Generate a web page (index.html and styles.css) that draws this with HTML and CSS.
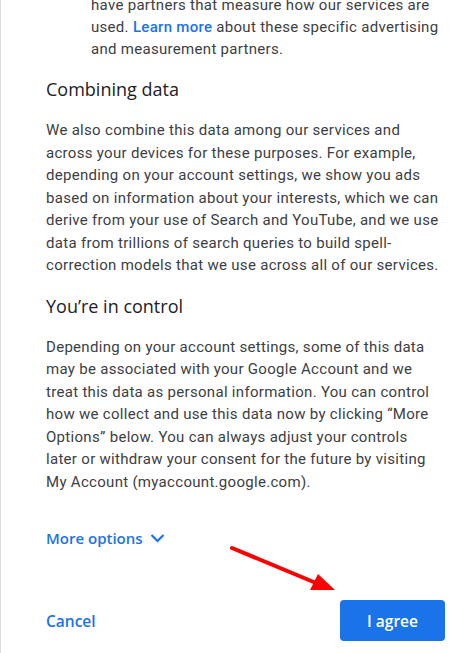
FILE: index.html
```html
<!DOCTYPE html>
<html lang="en">
<head>
<meta charset="utf-8">
<title>Consent</title>
<link rel="stylesheet" href="styles.css">
</head>
<body>
<div class="dialog">
  <div class="content">
    <p class="sub">have partners that measure how our services are used. <a class="link" href="#">Learn more</a> about these specific advertising and measurement partners.</p>

    <h2 class="heading">Combining data</h2>
    <p class="para">We also combine this data among our services and across your devices for these purposes. For example, depending on your account settings, we show you ads based on information about your interests, which we can derive from your use of Search and YouTube, and we use data from trillions of search queries to build spell-correction models that we use across all of our services.</p>

    <h2 class="heading">You’re in control</h2>
    <p class="para">Depending on your account settings, some of this data may be associated with your Google Account and we treat this data as personal information. You can control how we collect and use this data now by clicking “More Options” below. You can always adjust your controls later or withdraw your consent for the future by visiting My Account (myaccount.google.com).</p>

    <button class="more" type="button">More options
      <svg class="chev" width="15" height="10" viewBox="0 0 15 10"><path d="M1.5 2l6 6 6-6" fill="none" stroke="#1a73e8" stroke-width="2.2"/></svg>
    </button>
  </div>

  <div class="footer">
    <button class="cancel" type="button">Cancel</button>
    <button class="agree" type="button">I agree</button>
    <svg class="arrow" width="120" height="60" viewBox="0 0 120 60">
      <line x1="4" y1="6" x2="88" y2="41" stroke="#ff0000" stroke-width="4" stroke-linecap="round"/>
      <polygon points="107,48 82,48 90,32" fill="#ff0000"/>
    </svg>
  </div>
</div>
</body>
</html>
```

FILE: styles.css
```css
html, body {
  margin: 0;
  padding: 0;
  background: #ffffff;
}

.dialog {
  position: relative;
  width: 466px;
  height: 653px;
  border-left: 1px solid #dadce0;
  overflow: hidden;
  font-family: Roboto, "Liberation Sans", sans-serif;
  color: #3c4043;
}

.content {
  padding: 0 25px 0 45px;
  margin-top: -6px;
}

.sub {
  margin: 0;
  padding-left: 45px;
  font-size: 15px;
  letter-spacing: 0.3px;
  line-height: 22px;
}

.link {
  color: #1a73e8;
  font-weight: 500;
  text-decoration: none;
}

.heading {
  margin: 17px 0 18px;
  font-family: "Open Sans", Roboto, sans-serif;
  font-weight: 500;
  font-size: 18px;
  line-height: 24px;
  color: #202124;
}

.para {
  margin: 0;
  font-size: 15px;
  letter-spacing: 0.3px;
  line-height: 22.5px;
}

.more {
  display: flex;
  align-items: center;
  gap: 7px;
  margin-top: 34px;
  padding: 0;
  border: 0;
  background: none;
  font-family: "Open Sans", Roboto, sans-serif;
  font-weight: 600;
  font-size: 15px;
  line-height: 22px;
  color: #1a73e8;
}

.chev {
  display: block;
}

.footer {
  position: relative;
  display: flex;
  align-items: center;
  justify-content: space-between;
  margin-top: 51px;
  padding: 0 22px 0 45px;
}

.cancel {
  padding: 0;
  border: 0;
  background: none;
  font-family: "Open Sans", Roboto, sans-serif;
  font-weight: 600;
  font-size: 15.5px;
  color: #1a73e8;
}

.agree {
  width: 105px;
  height: 41px;
  border: 0;
  border-radius: 4px;
  background: #1a73e8;
  color: #ffffff;
  font-family: "Open Sans", Roboto, sans-serif;
  font-weight: 600;
  font-size: 15.5px;
}

.arrow {
  position: absolute;
  left: 227px;
  top: -58px;
}
```
